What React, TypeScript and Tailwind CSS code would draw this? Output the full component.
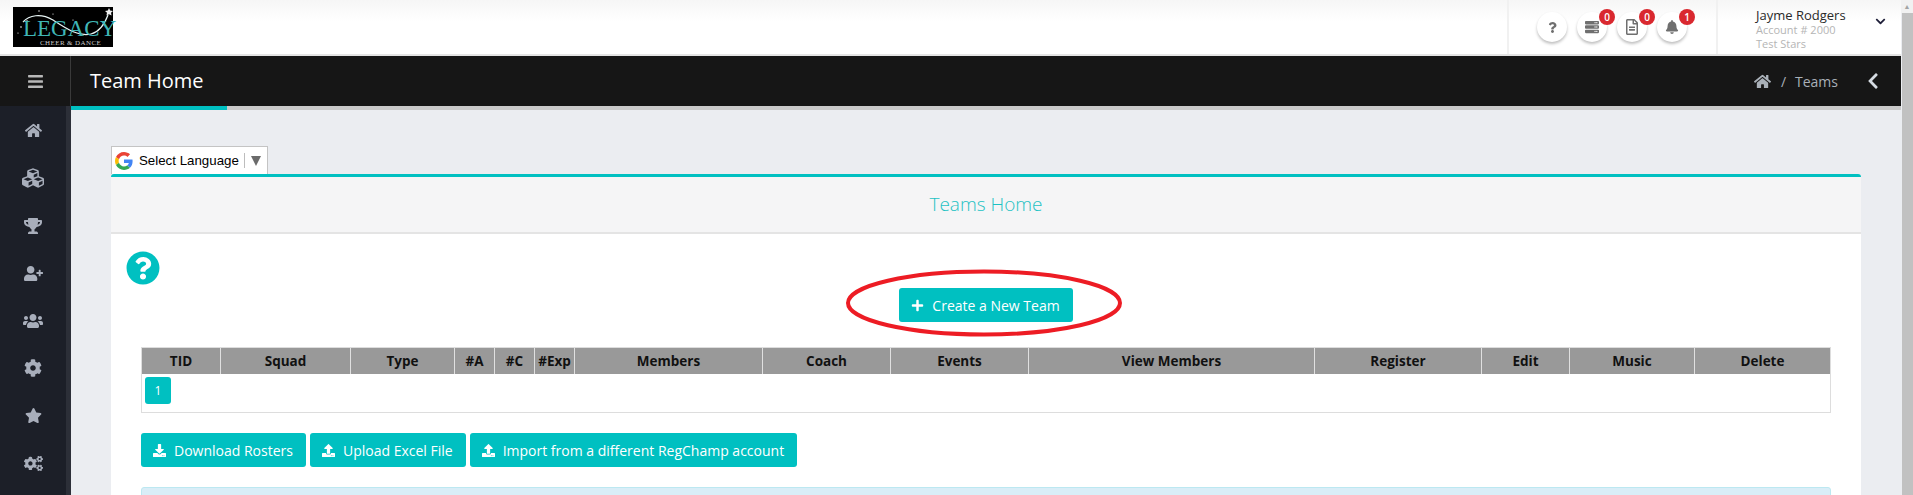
import { FaBars, FaBell, FaChevronDown, FaChevronLeft, FaCog, FaCogs, FaCubes, FaDownload, FaHome, FaPlus, FaQuestion, FaQuestionCircle, FaRegFileAlt, FaServer, FaStar, FaTrophy, FaUpload, FaUserPlus, FaUsers } from 'react-icons/fa';
import type { IconType } from 'react-icons';

const navIcons: { icon: IconType; size: string }[] = [
  { icon: FaHome, size: 'text-[17px]' },
  { icon: FaCubes, size: 'text-[22px]' },
  { icon: FaTrophy, size: 'text-[18px]' },
  { icon: FaUserPlus, size: 'text-[19px]' },
  { icon: FaUsers, size: 'text-[20px]' },
  { icon: FaCog, size: 'text-[18px]' },
  { icon: FaStar, size: 'text-[17px]' },
  { icon: FaCogs, size: 'text-[19px]' },
];

const columns = ['TID', 'Squad', 'Type', '#A', '#C', '#Exp', 'Members', 'Coach', 'Events', 'View Members', 'Register', 'Edit', 'Music', 'Delete'];

function Logo() {
  return (
    <div className="relative h-10 w-[100px] bg-black">
      <svg viewBox="0 0 100 40" className="absolute inset-0 h-full w-full">
        <path d="M10 15 C16 8 28 6 40 13 C54 22 66 30 78 27 C86 25 92 16 95 8" fill="none" stroke="#e8f5f5" strokeWidth="1.2" />
        <path d="M96 1 l1.200 2.600 2.800 .3 -2 1.900 .6 2.800 -2.600 -1.400 -2.600 1.400 .6 -2.800 -2 -1.900 2.800 -.3z" fill="#eee" />
        <circle cx="14" cy="14" r="0.8" fill="#fff" />
        <circle cx="26" cy="4" r="0.7" fill="#fff" />
        <circle cx="8" cy="20" r="0.8" fill="#fff" />
        <circle cx="5" cy="26" r="0.6" fill="#fff" />
        <circle cx="60" cy="13" r="0.6" fill="#fff" />
        <circle cx="74" cy="18" r="0.7" fill="#fff" />
        <circle cx="40" cy="7" r="0.6" fill="#fff" />
      </svg>
      <div className="absolute left-[10px] top-[10px] font-['Liberation_Serif',serif] text-[23px] leading-[23px] text-[#3fb5b5]">LEGACY</div>
      <div className="absolute left-[27px] top-[32px] whitespace-nowrap font-['Liberation_Serif',serif] text-[7px] leading-[8px] tracking-[0.4px] text-[#c9c9c9]">CHEER &amp; DANCE</div>
    </div>
  );
}

function GoogleG() {
  return (
    <svg viewBox="0 0 48 48" className="h-[18px] w-[18px]">
      <path fill="#EA4335" d="M24 9.500c3.500 0 6.700 1.200 9.200 3.600l6.900-6.900C35.900 2.400 30.500 0 24 0 14.600 0 6.500 5.400 2.600 13.200l8 6.200C12.500 13.600 17.800 9.500 24 9.500z" />
      <path fill="#4285F4" d="M46.900 24.500c0-1.600-.1-3.100-.4-4.500H24v9h12.900c-.6 3-2.200 5.500-4.700 7.200l7.700 6c4.500-4.200 7-10.300 7-17.700z" />
      <path fill="#FBBC05" d="M10.500 28.600c-.5-1.400-.8-3-.8-4.600s.3-3.200.8-4.600l-8-6.200C.9 16.500 0 20.100 0 24s.9 7.500 2.600 10.800l7.900-6.200z" />
      <path fill="#34A853" d="M24 48c6.500 0 11.900-2.100 15.900-5.800l-7.700-6c-2.200 1.500-5 2.300-8.200 2.300-6.200 0-11.500-4.200-13.400-9.800l-8 6.200C6.500 42.600 14.600 48 24 48z" />
    </svg>
  );
}

function RoundIcon({ icon: Icon, badge, size }: { icon: IconType; badge?: string; size: string }) {
  return (
    <div className="relative flex h-[30px] w-[30px] items-center justify-center rounded-full bg-white text-[#6f6f6f] shadow-[0_2px_3px_rgba(0,0,0,0.25)]">
      <Icon className={size} />
      {badge && (
        <span className="absolute right-[-8px] top-[-3px] flex h-4 w-4 items-center justify-center rounded-full bg-[#d9282f] text-[10px] font-semibold leading-none text-white">
          {badge}
        </span>
      )}
    </div>
  );
}

function ActionButton({ icon: Icon, label }: { icon: IconType; label: string }) {
  return (
    <button className="flex h-[34px] items-center gap-2 rounded-[3px] bg-[#00c0c1] pl-3 pr-[13px] text-[14px] text-white">
      <Icon className="text-[13px]" />
      {label}
    </button>
  );
}

export default function App() {
  return (
    <div className="flex h-[495px] w-[1913px] overflow-hidden bg-[#ebedf1] font-['Open_Sans',sans-serif]">
      <div className="flex w-[1901px] flex-col">
        <header className="flex h-14 shrink-0 items-center border-b-2 border-[#e4e4e4] bg-gradient-to-b from-[#f6f6f6] to-white to-40% pl-[13px]">
          <Logo />
          <div className="ml-auto flex h-full">
            <div className="flex w-[211px] items-center gap-[10px] border-x-2 border-[#f1f1f1] pl-[28px]">
              <RoundIcon icon={FaQuestion} size="text-[11px]" />
              <RoundIcon icon={FaServer} badge="0" size="text-[14px]" />
              <RoundIcon icon={FaRegFileAlt} badge="0" size="text-[16px]" />
              <RoundIcon icon={FaBell} badge="1" size="text-[14px]" />
            </div>
            <div className="flex w-[183px] items-start pl-[38px] pt-[8px]">
              <div className="flex flex-col">
                <span className="whitespace-nowrap text-[13px] leading-[14px] text-[#2a2a2a]">Jayme Rodgers</span>
                <span className="mt-[1px] whitespace-nowrap text-[11px] leading-[14px] text-[#b5b5b5]">Account # 2000</span>
                <span className="whitespace-nowrap text-[11px] leading-[13px] text-[#b5b5b5]">Test Stars</span>
              </div>
              <FaChevronDown className="ml-[29px] mt-[8px] text-[11px] text-[#20203a]" />
            </div>
          </div>
        </header>

        <div className="flex h-[50px] shrink-0 items-center bg-[#161616]">
          <div className="flex h-full w-[71px] items-center justify-center border-r border-[#3a3a3a] text-[#b8b8b8]">
            <FaBars className="text-[17px]" />
          </div>
          <h1 className="ml-[19px] text-[20px] leading-none text-white">Team Home</h1>
          <div className="ml-auto flex items-center pr-[19px] text-[#a9b0b8]">
            <FaHome className="text-[17px]" />
            <span className="ml-[10px] text-[14px]">/</span>
            <span className="ml-[9px] text-[14px]">Teams</span>
            <FaChevronLeft className="ml-[26px] text-[18px] text-[#d5dbe2]" />
          </div>
        </div>

        <div className="flex min-h-0 flex-1">
          <nav className="flex w-[71px] shrink-0 flex-col items-center border-r-[5px] border-[#2c2f38] bg-[#1c1f28] pt-px text-[#a8aebb]">
            {navIcons.map(({ icon: Icon, size }, i) => (
              <div key={i} className="flex h-[47.500px] w-full shrink-0 items-center justify-center">
                <Icon className={size} />
              </div>
            ))}
          </nav>

          <main className="min-w-0 flex-1">
            <div className="h-1 bg-[linear-gradient(to_right,#00c0c1_156px,#c9c9c9_156px)]" />
            <div className="px-10 pt-[36px]">
              <div className="flex h-[28px] w-[157px] items-center border-x border-t border-[#c4c4c4] bg-white pl-[3px] font-['Liberation_Sans',sans-serif] text-[13.300px] text-black">
                <GoogleG />
                <span className="ml-[6px]">Select Language</span>
                <span className="ml-[5px] h-[15px] border-l border-[#bdbdbd]" />
                <svg viewBox="0 0 10 10" className="ml-[6px] h-[10px] w-[10px]">
                  <polygon points="0,0 10,0 5,10" fill="#6b6b6b" />
                </svg>
              </div>
              <section className="w-[1750px] rounded-t-[3px] border-t-[3px] border-[#00c0c1] bg-white">
                <div className="flex h-[57px] items-center justify-center border-b-2 border-[#e4e4e4] bg-[#f5f5f6] text-[19px] font-light text-[#1ec2c4]">
                  Teams Home
                </div>
                <div className="relative px-[30px]">
                  <FaQuestionCircle className="absolute left-[15px] top-[17px] text-[34px] text-[#00c0c1]" />
                  <div className="flex justify-center pt-[54px]">
                    <div className="relative">
                      <ActionButton icon={FaPlus} label="Create a New Team" />
                      <svg className="pointer-events-none absolute left-[-53px] top-[-18px] overflow-visible" width="278" height="66">
                        <ellipse cx="138" cy="33" rx="136" ry="31.500" fill="none" stroke="#ed1c24" strokeWidth="4" />
                      </svg>
                    </div>
                  </div>
                  <div className="mt-[25px] w-[1690px] border border-[#dddddd]">
                    <div className="grid h-[26px] grid-cols-[79px_130px_104px_40px_40px_40px_188px_128px_138px_286px_167px_88px_125px_135px] bg-[#999999] text-[13.500px] font-bold text-[#111]">
                      {columns.map((c) => (
                        <div key={c} className="flex items-center justify-center whitespace-nowrap border-r border-[#e0e0e0] last:border-r-0">
                          {c}
                        </div>
                      ))}
                    </div>
                    <div className="h-[38px] pl-[3px] pt-[3px]">
                      <span className="flex h-[27px] w-[26px] items-center justify-center rounded-[3px] bg-[#00c0c1] text-[12px] text-white">1</span>
                    </div>
                  </div>
                  <div className="mt-[20px] flex gap-1">
                    <ActionButton icon={FaDownload} label="Download Rosters" />
                    <ActionButton icon={FaUpload} label="Upload Excel File" />
                    <ActionButton icon={FaUpload} label="Import from a different RegChamp account" />
                  </div>
                  <div className="mt-[20px] h-[40px] w-[1690px] rounded-t-[3px] border border-[#bce8f1] bg-[#d9edf7]" />
                </div>
              </section>
            </div>
          </main>
        </div>
      </div>
      <div className="flex w-3 shrink-0 flex-col">
        <div className="h-[13px] bg-[#f1f1f1] text-center text-[7px] leading-[13px] text-[#a3a3a3]">▲</div>
        <div className="ml-px flex-1 bg-[#c1c1c1]" />
      </div>
    </div>
  );
}
